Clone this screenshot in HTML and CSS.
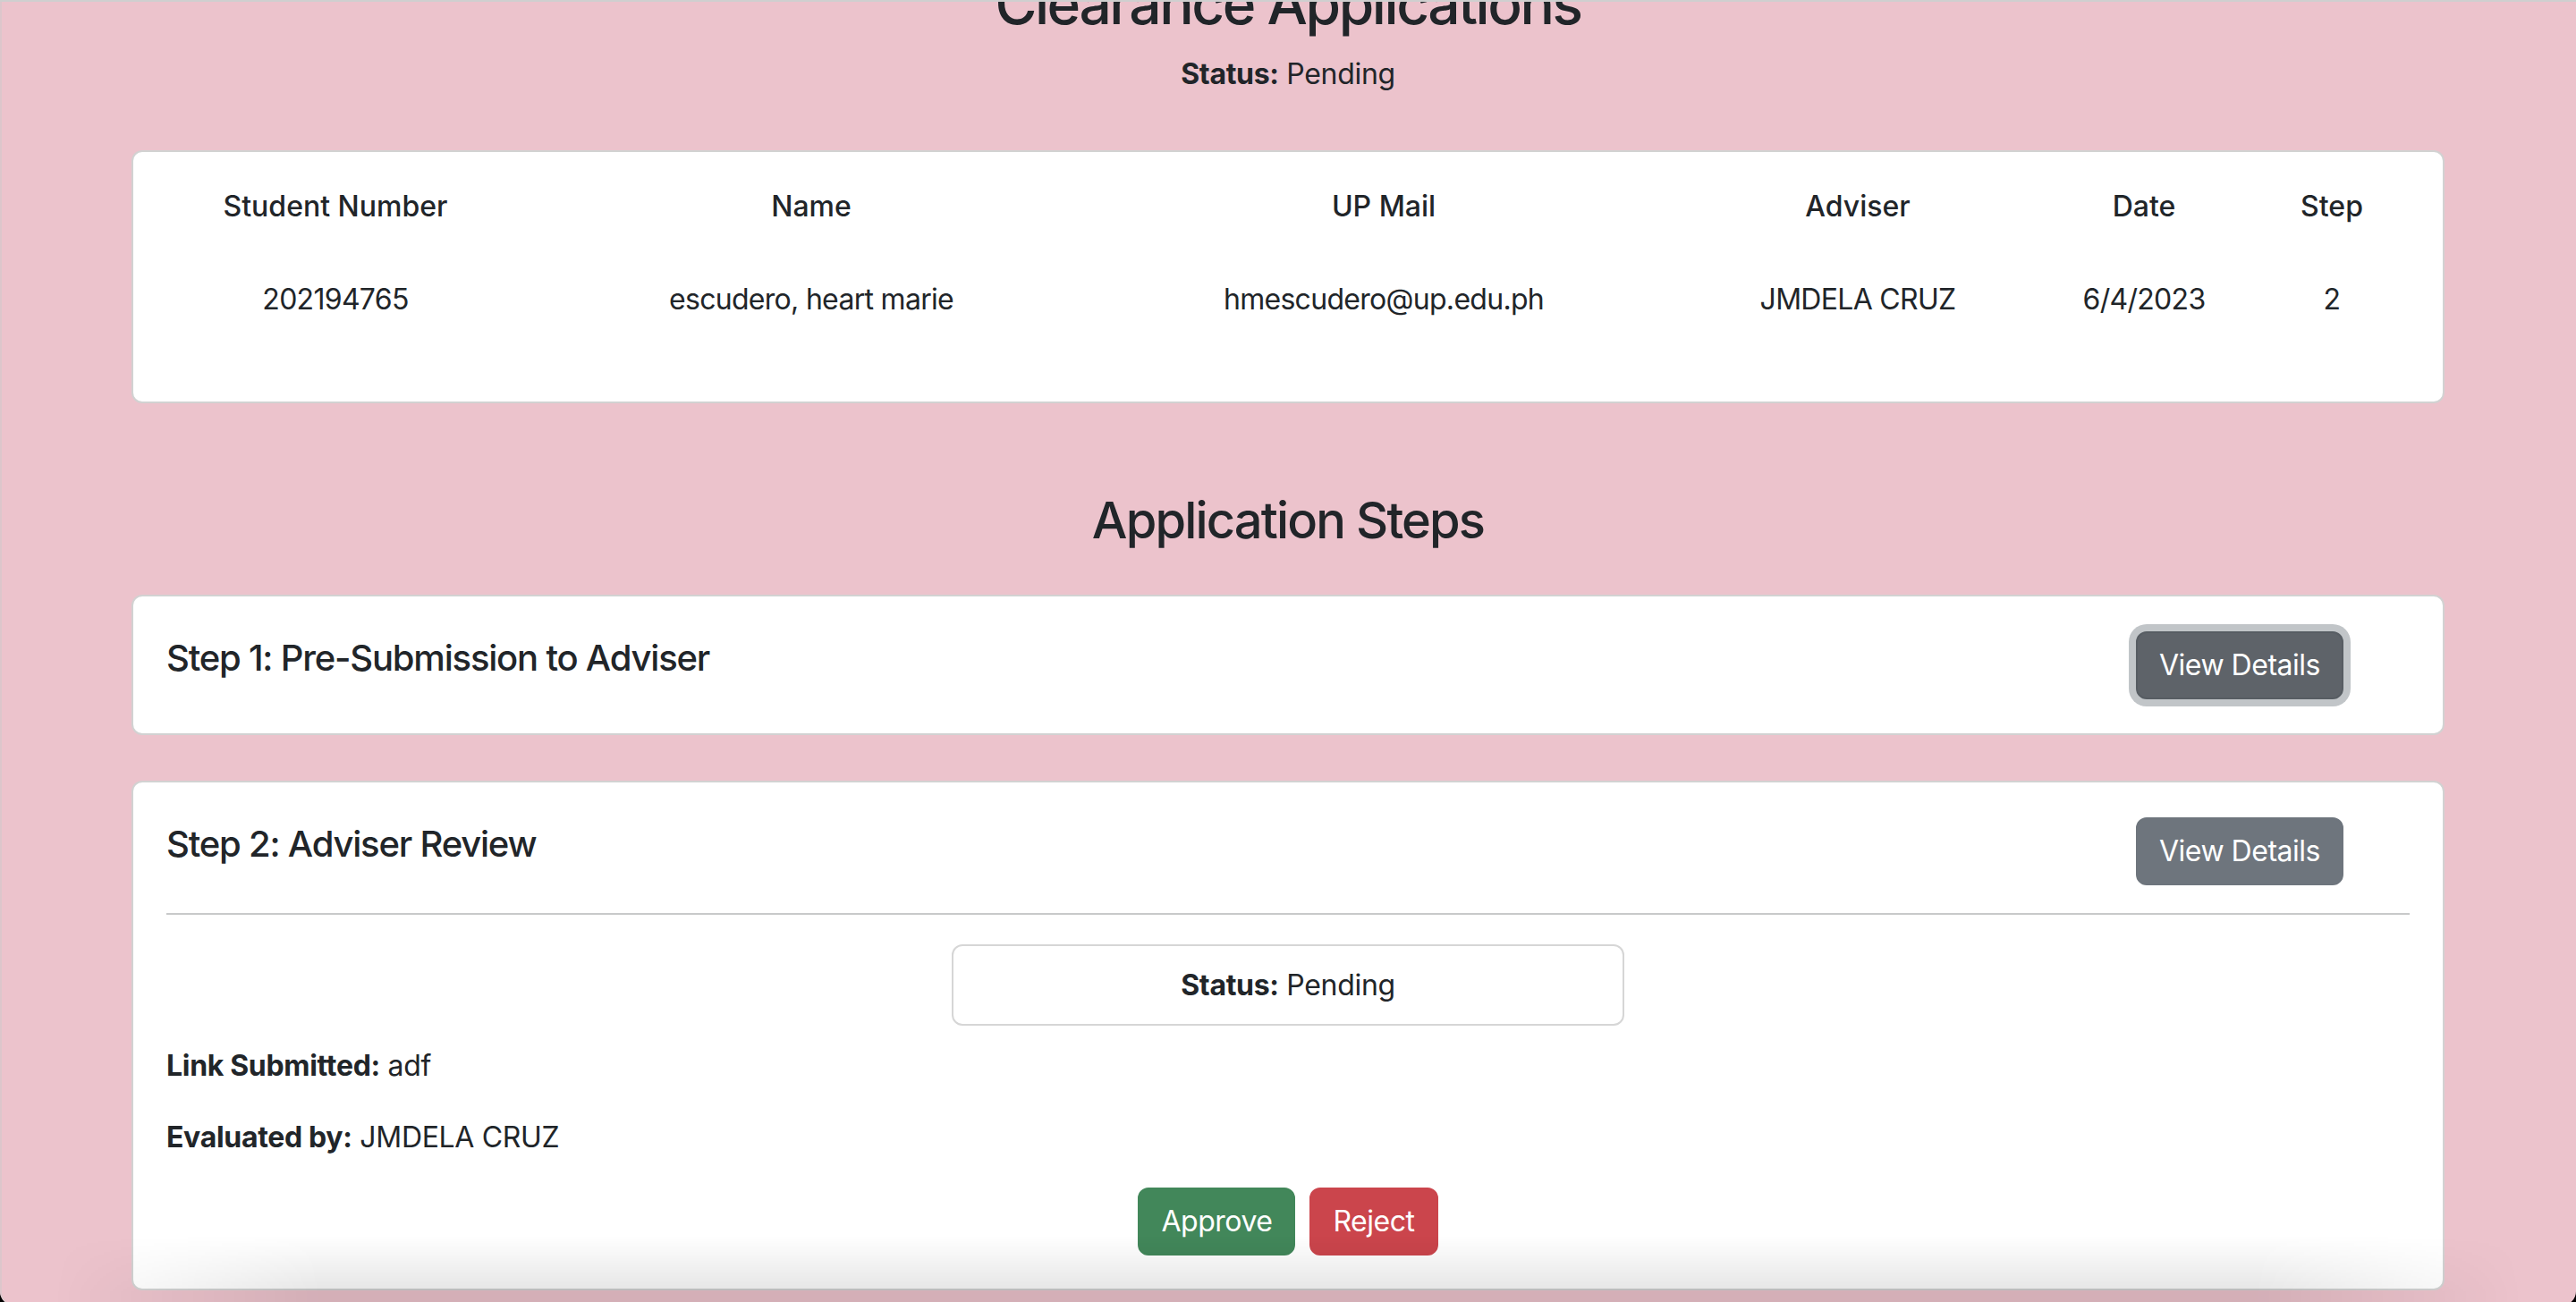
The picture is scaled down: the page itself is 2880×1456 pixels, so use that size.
FILE: index.html
```html
<!DOCTYPE html>
<html lang="en">
<head>
<meta charset="utf-8">
<title>Clearance Applications</title>
<link rel="stylesheet" href="styles.css">
</head>
<body>
<div class="frame">
  <main class="container">
    <h2 class="page-title">Clearance Applications</h2>
    <p class="status-line"><b>Status:</b> Pending</p>

    <section class="card table-card">
      <table class="app-table">
        <colgroup>
          <col class="c1"><col class="c2"><col class="c3"><col class="c4"><col class="c5"><col class="c6">
        </colgroup>
        <thead>
          <tr><th>Student Number</th><th>Name</th><th>UP Mail</th><th>Adviser</th><th>Date</th><th>Step</th></tr>
        </thead>
        <tbody>
          <tr><td>202194765</td><td>escudero, heart marie</td><td>hmescudero@up.edu.ph</td><td>JMDELA CRUZ</td><td>6/4/2023</td><td>2</td></tr>
        </tbody>
      </table>
    </section>

    <h3 class="section-title">Application Steps</h3>

    <section class="card step-card">
      <div class="step-head">
        <h5 class="step-title">Step 1: Pre-Submission to Adviser</h5>
        <button class="btn btn-secondary is-focused">View Details</button>
      </div>
    </section>

    <section class="card step-card step-card-2">
      <div class="step-head">
        <h5 class="step-title">Step 2: Adviser Review</h5>
        <button class="btn btn-secondary">View Details</button>
      </div>
      <hr class="divider">
      <div class="status-box"><b>Status:</b> Pending</div>
      <p class="detail first"><b>Link Submitted:</b> adf</p>
      <p class="detail"><b>Evaluated by:</b> JMDELA CRUZ</p>
      <div class="actions">
        <button class="btn btn-success">Approve</button>
        <button class="btn btn-danger">Reject</button>
      </div>
    </section>
  </main>
  <div class="bottom-shade"></div>
</div>
</body>
</html>
```

FILE: styles.css
```css
html {
  background: #000;
  height: 100%;
  overflow: hidden;
}

body {
  margin: 0;
  height: 1456px;
  overflow: hidden;
  font-family: Inter, "Noto Sans", "Liberation Sans", sans-serif;
  font-size: 32px;
  line-height: 1.5;
  color: #212529;
  letter-spacing: -0.01em;
}

b {
  font-weight: 700;
}

.frame {
  position: relative;
  height: 1460px;
  box-sizing: border-box;
  background: #ecc3cc;
  border-top: 2px solid #cfcfcf;
  border-radius: 0 0 16px 16px;
  box-shadow: inset 2px 0 0 #dcc6cb;
  overflow: hidden;
}

.container {
  margin: 0 147px;
  text-align: center;
}

.page-title {
  margin: -36px 0 16px;
  font-size: 64px;
  line-height: 1.2;
  font-weight: 500;
  letter-spacing: -0.038em;
}

.status-line {
  margin: 0 0 61px;
}

.card {
  background: #fff;
  border: 2px solid rgba(0, 0, 0, 0.175);
  border-radius: 12px;
  text-align: left;
}

.table-card {
  padding: 37px 0 90px 38px;
}

.app-table {
  width: 2544px;
  table-layout: fixed;
  border-collapse: collapse;
}

.app-table .c1 { width: 376px; }
.app-table .c2 { width: 688px; }
.app-table .c3 { width: 592px; }
.app-table .c4 { width: 468px; }
.app-table .c5 { width: 172px; }
.app-table .c6 { width: 248px; }

.app-table th,
.app-table td {
  padding: 0;
  text-align: center;
  white-space: nowrap;
}

.app-table th {
  font-weight: 500;
  padding-bottom: 28px;
  letter-spacing: 0;
}

.app-table td {
  font-weight: 400;
  padding-top: 28px;
  letter-spacing: -0.022em;
}

.section-title {
  margin: 98px 0 49px;
  font-size: 56px;
  line-height: 1.2;
  font-weight: 500;
  letter-spacing: -0.033em;
}

.step-card {
  padding: 39px 37px 38px;
}

.step-card-2 {
  margin-top: 51px;
  padding-bottom: 37px;
}

.step-head {
  display: flex;
  justify-content: space-between;
  align-items: flex-start;
}

.step-title {
  margin: 6.5px 0 0;
  font-size: 40px;
  line-height: 48px;
  font-weight: 500;
  letter-spacing: -0.03em;
}

.step-head .btn {
  margin-right: 74px;
}

.btn {
  font-family: inherit;
  font-size: 32px;
  line-height: 48px;
  font-weight: 400;
  letter-spacing: -0.015em;
  color: #fff;
  padding: 12px 24px;
  border: 2px solid transparent;
  border-radius: 12px;
  cursor: pointer;
}

.btn-secondary {
  background: #6e757d;
  border-color: #6e757d;
}

.btn-secondary.is-focused {
  background: #5e6369;
  border-color: #575d63;
  box-shadow: 0 0 0 8px #c1c5c8;
}

.btn-success {
  background: #42875a;
  border-color: #42875a;
}

.btn-danger {
  background: #cb454c;
  border-color: #cb454c;
}

.divider {
  margin: 31px 0 33px;
  border: 0;
  border-top: 2px solid #c8c9ca;
  height: 0;
}

.status-box {
  width: 30%;
  margin: 0 auto;
  box-sizing: border-box;
  padding: 20px 0 19px;
  border: 2px solid #d6d6d6;
  border-radius: 12px;
  text-align: center;
}

.detail {
  margin: 0 0 32px;
}

.detail.first {
  margin-top: 21px;
}

.actions {
  display: flex;
  justify-content: center;
  gap: 16px;
}

.bottom-shade {
  position: absolute;
  left: 0;
  right: 0;
  top: 1380px;
  height: 80px;
  pointer-events: none;
  background: linear-gradient(to bottom, rgba(0, 0, 0, 0) 0, rgba(0, 0, 0, 0.1) 63px, rgba(0, 0, 0, 0.1) 100%);
  -webkit-mask-image: linear-gradient(to right, transparent 60px, #000 360px, #000 2520px, transparent 2820px);
  mask-image: linear-gradient(to right, transparent 60px, #000 360px, #000 2520px, transparent 2820px);
}
```
